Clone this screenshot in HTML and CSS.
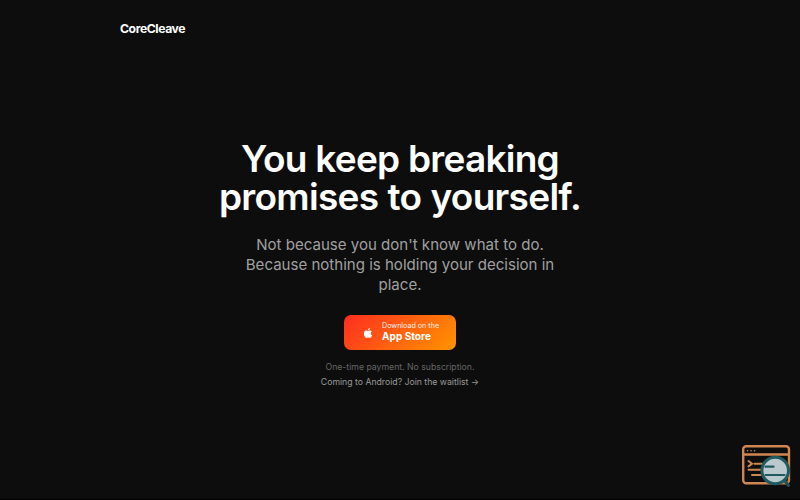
FILE: index.html
```html
<!DOCTYPE html>
<html lang="en">
<head>
<meta charset="utf-8">
<title>CoreCleave</title>
<link rel="stylesheet" href="styles.css">
</head>
<body>
<header class="header"><a class="brand">CoreCleave</a></header>
<main class="hero">
  <h1 class="title"><span class="line line-first">You keep breaking</span><span class="line line-second">promises to yourself.</span></h1>
  <p class="lead">Not because you don't know what to do.<br>Because nothing is holding your decision in<br>place.</p>
  <a class="store">
    <svg class="apple" viewBox="0 0 24 24" fill="currentColor"><path d="M18.71 19.5c-.83 1.24-1.71 2.45-3.05 2.47-1.34.03-1.77-.79-3.29-.79-1.53 0-2 .77-3.27.82-1.31.05-2.3-1.32-3.14-2.53C4.25 17 2.94 12.45 4.7 9.39c.87-1.52 2.43-2.48 4.12-2.51 1.28-.02 2.5.87 3.29.87.78 0 2.26-1.07 3.81-.91.65.03 2.47.26 3.64 1.98-.09.06-2.17 1.28-2.15 3.81.03 3.02 2.65 4.03 2.68 4.04-.03.07-.42 1.44-1.38 2.83M13 3.5c.73-.83 1.94-1.46 2.94-1.5.13 1.17-.34 2.35-1.04 3.19-.69.85-1.83 1.51-2.95 1.42-.15-1.15.41-2.35 1.05-3.11z"/></svg>
    <span class="store-text"><span class="store-small">Download on the</span><span class="store-name">App Store</span></span>
  </a>
  <p class="note">One-time payment. No subscription.</p>
  <a class="waitlist">Coming to Android? Join the waitlist →</a>
</main>
<svg class="badge" viewBox="0 0 50 44" fill="none" stroke-linecap="round">
  <g stroke="#cf8650" stroke-width="2.4">
    <rect x="2.2" y="2.3" width="45.800" height="37" rx="3"/>
    <path d="M2.5 10.500h45"/>
    <path d="M6.500 6.700h.1M10 6.700h.1M13.500 6.700h.1" stroke-width="1.6"/>
    <path d="M7.500 17l3.500 2.700-3.500 2.700M13.500 19.700h9M7.500 25.700h12M11 31h9" stroke-width="2"/>
  </g>
  <path d="M43.500 36.500l4 5" stroke="#205158" stroke-width="3"/>
  <circle cx="34.200" cy="26.500" r="13.300" fill="#b9c9ce" stroke="#205a60" stroke-width="3"/>
  <path d="M24.500 22.700h8M24.500 31h19" stroke="#205a60" stroke-width="2.200"/>
</svg>
</body>
</html>
```
FILE: styles.css
```css
* { box-sizing: border-box; }
body {
  margin: 0;
  height: 500px;
  overflow: hidden;
  background: #0d0d0d;
  border-bottom: 1px solid #000;
  color: #fff;
  font-family: Inter, sans-serif;
}
.header { height: 57px; padding: 0 120px; display: flex; align-items: center; }
.brand { font-size: 12.2px; font-weight: 700; letter-spacing: -0.42px; }
.hero { display: flex; flex-direction: column; align-items: center; padding-top: 83px; text-align: center; }
.title { margin: 0; font-size: 37px; line-height: 37.5px; font-weight: 600; }
.line { display: block; white-space: nowrap; }
.line-first { letter-spacing: -0.75px; }
.line-second { letter-spacing: -0.7px; word-spacing: 0.5px; }
.lead { margin: 20px 0 0; font-size: 15.05px; line-height: 20px; color: #a0a0a0; white-space: nowrap; }
.store {
  display: flex;
  align-items: center;
  gap: 8px;
  width: 112px;
  height: 35px;
  margin-top: 20px;
  padding: 0 0 0 18px;
  border-radius: 7px;
  background: linear-gradient(135deg, #ff2d20, #ff9500);
}
.apple { width: 12px; height: 12px; }
.store-text { display: flex; flex-direction: column; padding-bottom: 2px; text-align: left; white-space: nowrap; }
.store-small { font-size: 7.15px; line-height: 9px; opacity: .9; }
.store-name { font-size: 10.1px; line-height: 13px; font-weight: 700; }
.note { margin: 11px 0 0; font-size: 8.7px; line-height: 12px; color: #666; }
.waitlist { margin-top: 3px; font-size: 8.7px; line-height: 12px; color: #999; }
.badge { position: absolute; left: 741px; top: 444px; width: 50px; height: 44px; }
```
